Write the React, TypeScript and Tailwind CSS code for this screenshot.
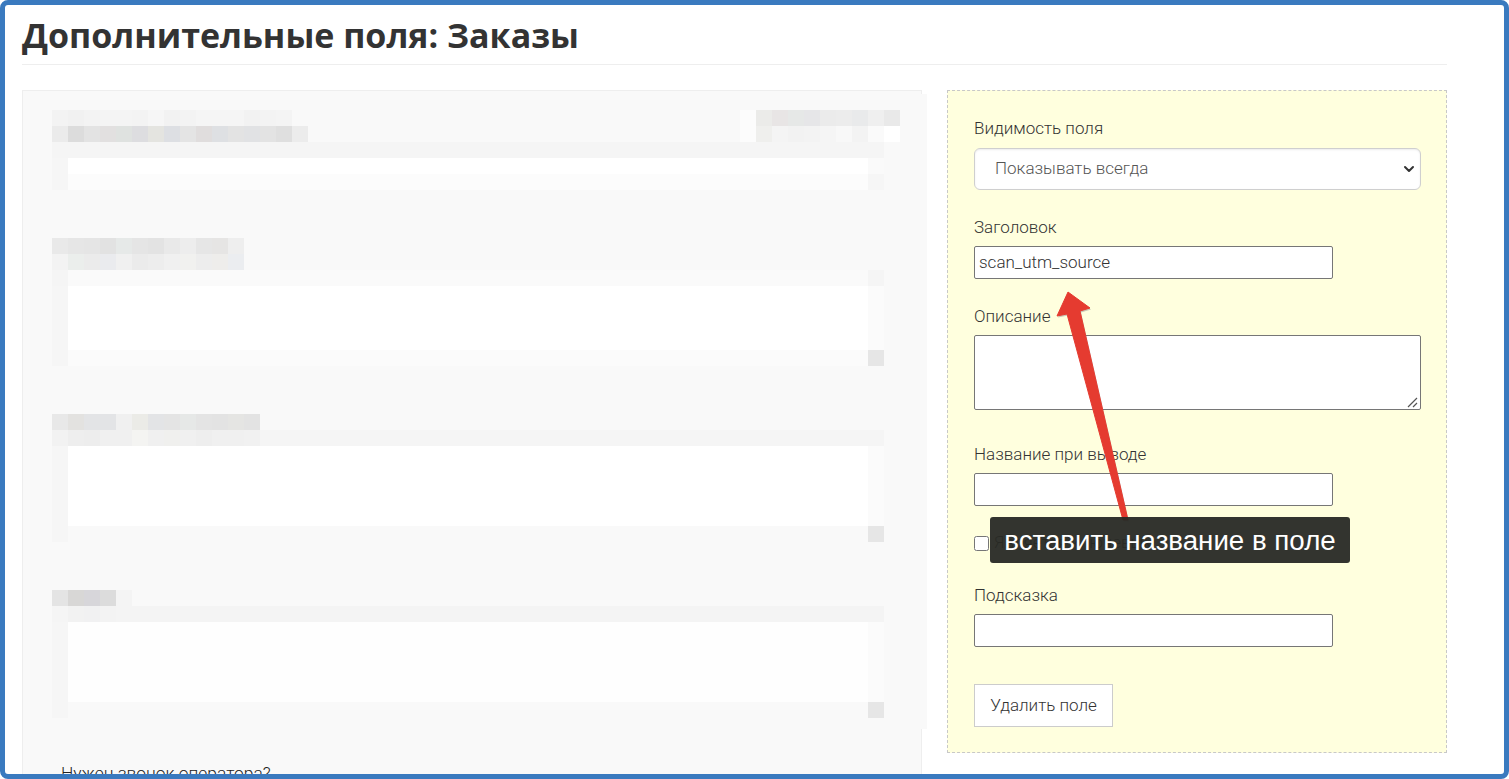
import { ChevronDown } from "lucide-react";

const titleFont = "font-['Open_Sans','Liberation_Sans',sans-serif]";
const bodyFont = "font-['Roboto','Liberation_Sans',sans-serif]";

function Cells({ cells }: { cells: string[] }) {
  return (
    <div className="flex h-4">
      {cells.map((c, i) => (
        <div key={i} className={`h-4 w-4 ${c}`} />
      ))}
    </div>
  );
}

const row1a = ["bg-[#f3f3f3]", "bg-[#f1f1f1]", "bg-[#f3f3f3]", "bg-[#f4f4f4]", "bg-[#f4f4f4]", "bg-[#f3f3f3]", "bg-[#f6f6f6]", "bg-[#f2f2f2]", "bg-[#f3f3f3]", "bg-[#f5f5f5]", "bg-[#f5f5f5]", "bg-[#f5f5f5]", "bg-[#f2f2f2]", "bg-[#f3f3f3]", "bg-[#f4f4f4]", "bg-[#f9f9f9]"];
const row1b = ["bg-[#ebebeb]", "bg-[#dcdcdc]", "bg-[#e3e3e3]", "bg-[#e2e0e0]", "bg-[#dfe2e0]", "bg-[#dddde0]", "bg-[#e4e4e0]", "bg-[#dddfe3]", "bg-[#e4e4e4]", "bg-[#e0dddd]", "bg-[#dee0e3]", "bg-[#e3e3e3]", "bg-[#e1e2e4]", "bg-[#e3e3e3]", "bg-[#dfdfdf]", "bg-[#ececec]"];
const side1a = ["bg-[#fcfcfc]", "bg-[#ebebe9]", "bg-[#e8e5e5]", "bg-[#e6e8e7]", "bg-[#e6e6e8]", "bg-[#ebebeb]", "bg-[#ececec]", "bg-[#e9eaeb]", "bg-[#efefef]", "bg-[#e9e9e9]"];
const side1b = ["bg-[#fcfcfc]", "bg-[#efefed]", "bg-[#f4f4f4]", "bg-[#f2f2f2]", "bg-[#f3f3f3]", "bg-[#f5f5f5]", "bg-[#f8f8f8]", "bg-[#f3f3f3]", "bg-[#fafafa]", "bg-[#ffffff]"];
const row2a = ["bg-[#e9e9e9]", "bg-[#e6e6e6]", "bg-[#e5e5e5]", "bg-[#e2e2e2]", "bg-[#e6e9e8]", "bg-[#e5e5e5]", "bg-[#e3e3e3]", "bg-[#e9e9e9]", "bg-[#ededed]", "bg-[#e6e6e6]", "bg-[#e6e5e4]", "bg-[#eeeeee]"];
const row2b = ["bg-[#f3f3f3]", "bg-[#ebeeec]", "bg-[#ebebeb]", "bg-[#eaebee]", "bg-[#f0f0f0]", "bg-[#ebebeb]", "bg-[#ededed]", "bg-[#f0f0f0]", "bg-[#f1f1ef]", "bg-[#ededed]", "bg-[#eeedeb]", "bg-[#ebedf0]"];
const row3a = ["bg-[#e8e8e8]", "bg-[#e3e2e0]", "bg-[#e3e4e6]", "bg-[#e3e4e6]", "bg-[#f0f0f0]", "bg-[#ebebe7]", "bg-[#e3e4e6]", "bg-[#e4e4e4]", "bg-[#e6e8e7]", "bg-[#e4e4e4]", "bg-[#e3e3e3]", "bg-[#e5e5e3]", "bg-[#e3e3e3]"];
const row3b = ["bg-[#f2f2f2]", "bg-[#eeeeee]", "bg-[#ededed]", "bg-[#f0f0f0]", "bg-[#f0f0f0]", "bg-[#f4f4f2]", "bg-[#f0f0f0]", "bg-[#f0f0ee]", "bg-[#f0f0f0]", "bg-[#eeeeee]", "bg-[#f0f0f0]", "bg-[#f0f0f0]", "bg-[#f1f1f1]"];
const row4a = ["bg-[#e4e4e4]", "bg-[#d8d7d6]", "bg-[#d7d6da]", "bg-[#dcdcdc]", "bg-[#f4f4f4]"];
const row4b = ["bg-[#f5f5f5]", "bg-[#f2f2f2]", "bg-[#f1f1f2]", "bg-[#f3f3f3]"];

function BlurField({ h, strip, stripBg, fill, bottom, head }: { h: string; strip: string[]; stripBg: string; fill: string; bottom: string; head: string }) {
  return (
    <div className="w-[832px]">
      <div className={`flex h-4 justify-between ${stripBg}`}>
        <Cells cells={strip} />
        <div className={`h-4 w-4 ${head}`} />
      </div>
      <div className="flex">
        <div className="w-4 bg-[#f6f6f6]" />
        <div className={`w-[800px] ${fill} ${h}`} />
        <div className="w-4 bg-[#fbfbfb]" />
      </div>
      <div className="flex h-4">
        <div className="w-4 bg-[#f6f6f6]" />
        <div className={`w-[800px] ${bottom}`} />
        <div className="w-4 bg-[#e6e6e6]" />
      </div>
    </div>
  );
}

function Field({ label, className, gap, children }: { label: string; className: string; gap: string; children: React.ReactNode }) {
  return (
    <div className={className}>
      <label className={`block text-[17px] leading-[20px] font-light text-[#333] ${gap}`}>{label}</label>
      {children}
    </div>
  );
}

const inputCls = "block h-[33px] w-[359px] rounded-[2px] border border-[#767676] bg-white pl-1 pb-[2px] text-[17px] font-light text-[#333] outline-none";

export default function App() {
  return (
    <div className={`relative h-[779px] w-full overflow-hidden rounded-[8px] border-[5px] border-[#3a7abf] bg-white ${bodyFont}`}>
      <div className="pl-[17px] pr-[57px]">
        <h1 className={`pt-[8px] pb-[7px] text-[34px] leading-[44px] font-bold text-[#333] ${titleFont}`}>Дополнительные поля: Заказы</h1>
        <div className="h-px bg-[#eeeeee]" />

        <div className="mt-[25px] flex items-start gap-[25px]">
          <div className="relative h-[700px] w-[900px] shrink-0 border border-[#eeeeee] bg-[#f9f9f9] pl-[29px] pt-[19px]">
            <div className="absolute top-[3px] -right-[6px] h-[635px] w-[6px] bg-[#f9f9f9]" />
            <div className="flex w-[848px] justify-between">
              <div>
                <Cells cells={row1a} />
                <Cells cells={row1b} />
              </div>
              <div>
                <Cells cells={side1a} />
                <Cells cells={side1b} />
              </div>
            </div>
            <div className="w-[832px]">
              <div className="h-4 bg-[#f5f5f5]" />
              <div className="flex h-4">
                <div className="w-4 bg-[#f6f6f6]" />
                <div className="w-[800px] bg-white" />
                <div className="w-4 bg-[#fafafa]" />
              </div>
              <div className="flex h-4">
                <div className="w-4 bg-[#f6f6f6]" />
                <div className="w-[800px] bg-[#fcfcfc]" />
                <div className="w-4 bg-[#f6f6f6]" />
              </div>
            </div>

            <div className="mt-12">
              <Cells cells={row2a} />
              <Cells cells={row2b} />
              <BlurField h="h-16" strip={["bg-[#f5f5f5]"]} stripBg="bg-[#fafafa]" fill="bg-white" bottom="bg-[#fbfbfb]" head="bg-[#f5f5f5]" />
            </div>

            <div className="mt-12">
              <Cells cells={row3a} />
              <BlurField h="h-20" strip={row3b} stripBg="bg-[#f5f5f5]" fill="bg-white" bottom="bg-[#f9f9f9]" head="bg-[#f5f5f5]" />
            </div>

            <div className="mt-12">
              <Cells cells={row4a} />
              <BlurField h="h-20" strip={row4b} stripBg="bg-[#f4f4f4]" fill="bg-[#fefefe]" bottom="bg-[#f9f9f9]" head="bg-[#f4f4f4]" />
            </div>

            <p className="mt-[45px] pl-[9px] text-[17.4px] leading-5 font-light text-[#222]">Нужен звонок оператора?</p>
          </div>

          <div className="h-[663px] w-[500px] shrink-0 border border-dashed border-[#c8c8c8] bg-[#ffffde] px-[26px] pt-[27px]">
            <Field label="Видимость поля" className="" gap="mb-[10px]">
              <div className="relative w-[447px]">
                <select className="block h-[42px] w-full appearance-none rounded-[6px] border border-[#cfcfcf] bg-white pl-5 text-[17px] font-light text-[#555] shadow-[inset_0_1px_2px_rgba(0,0,0,0.08)] outline-none">
                  <option>Показывать всегда</option>
                </select>
                <ChevronDown className="absolute top-[13px] right-[4px] h-4 w-4 text-[#333]" strokeWidth={3} />
              </div>
            </Field>
            <Field label="Заголовок" className="mt-[27px]" gap="mb-[9px]">
              <input className={inputCls} defaultValue="scan_utm_source" />
            </Field>
            <Field label="Описание" className="mt-[27px]" gap="mb-[9px]">
              <div className="relative w-[447px]">
                <textarea className="block h-[75px] w-full resize-none rounded-[2px] border border-[#767676] bg-white outline-none" />
                <svg viewBox="0 0 11 11" className="absolute right-[3px] bottom-[2px] h-[11px] w-[11px] stroke-[#555]">
                  <path d="M1 10 L10 1 M6 10 L10 6" fill="none" strokeWidth="1.2" />
                </svg>
              </div>
            </Field>
            <Field label="Название при выводе" className="mt-[34px]" gap="mb-[9px]">
              <input className={inputCls} />
            </Field>
            <div className="mt-[27px] flex h-5 items-center gap-[5px]">
              <input type="checkbox" className="m-0 h-[15px] w-[15px]" />
              <span className="text-[17px] font-light text-[#333]">Является ключевым</span>
            </div>
            <Field label="Подсказка" className="mt-[32px]" gap="mb-[9px]">
              <input className={inputCls} />
            </Field>
            <button className="mt-[37px] block h-[43px] w-[139px] border border-[#cccccc] bg-white text-[17px] font-light text-[#333]">Удалить поле</button>
          </div>
        </div>
      </div>

      {/* annotation over the screenshot */}
      <svg className="absolute left-[1045px] top-[280px] h-[240px] w-[90px]" viewBox="0 0 90 240">
        <path d="M18 7 L40 23 L30 26 L78 235 L73 235 L17 29 L7 31 Z" transform="translate(1 1.5)" fill="#888" opacity="0.45" />
        <path d="M18 7 L40 23 L30 26 L78 235 L73 235 L17 29 L7 31 Z" fill="#e53b30" stroke="#e53b30" strokeLinejoin="round" />
      </svg>
      <div className="absolute left-[985px] top-[512px] flex h-[46px] w-[360px] items-center justify-center rounded-[3px] bg-[#282925]/95 pt-[2px] font-['Liberation_Sans',sans-serif] text-[27.7px] text-white">
        вставить название в поле
      </div>
    </div>
  );
}
